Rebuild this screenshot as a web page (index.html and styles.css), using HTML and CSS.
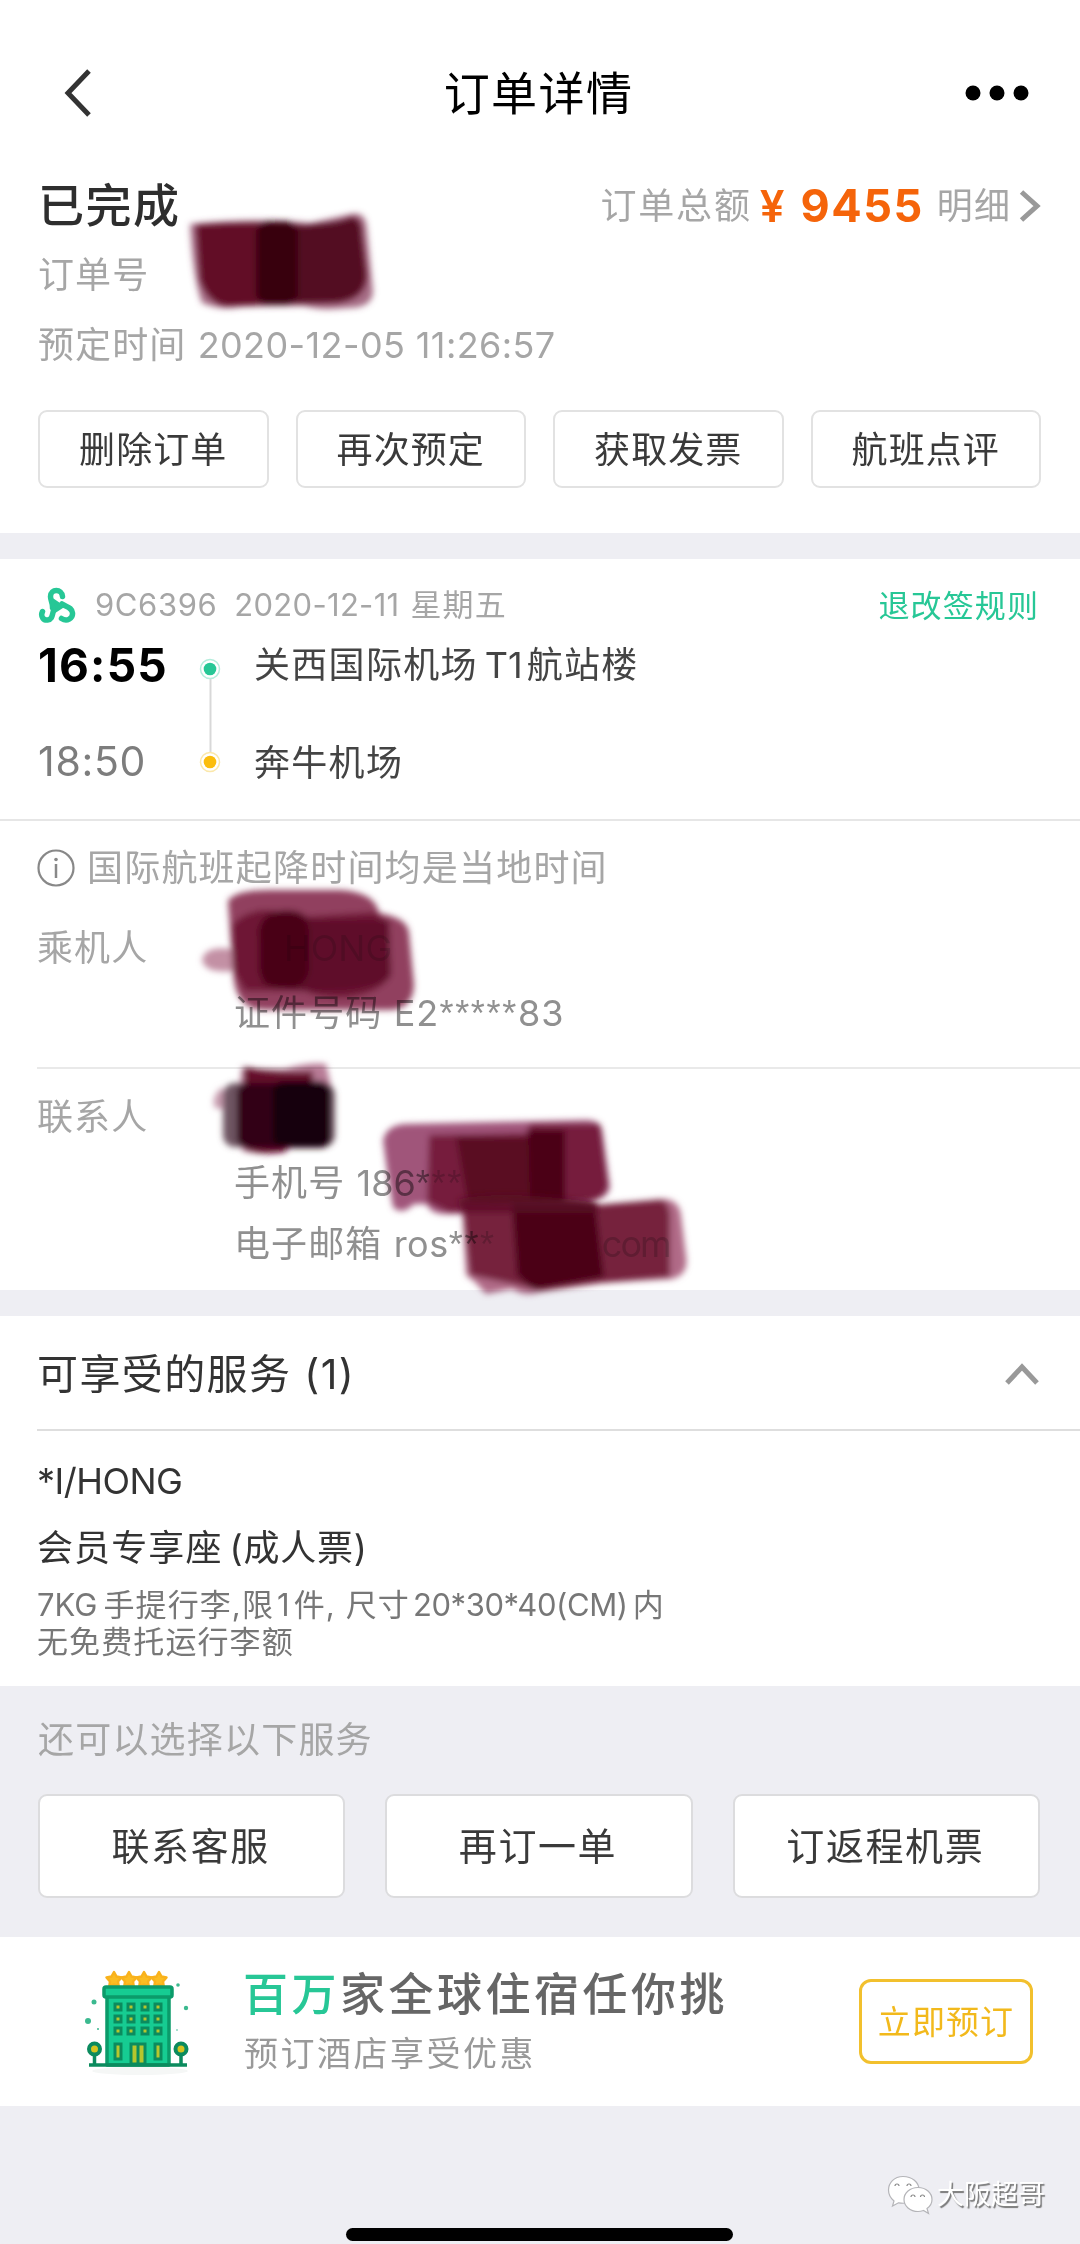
FILE: index.html
```html
<!DOCTYPE html>
<html lang="zh-CN">
<head>
<meta charset="utf-8">
<title>订单详情</title>
<link rel="stylesheet" href="styles.css">
</head>
<body>
<main class="page">
  <header class="navbar">
    <svg class="back" viewBox="0 0 30 50"><path d="M26 3 5 25 26 47" fill="none" stroke="#333" stroke-width="5"/></svg>
    <h1>订单详情</h1>
    <svg class="more" viewBox="0 0 66 16"><circle cx="9" cy="8" r="7.5"/><circle cx="33" cy="8" r="7.5"/><circle cx="57" cy="8" r="7.5"/></svg>
  </header>

  <section class="summary">
    <div class="status-row">
      <h2>已完成</h2>
      <div class="total"><span>订单总额</span><b class="yen">¥</b><b class="amount">9455</b><span>明细</span>
        <svg class="arrow" viewBox="0 0 22 32"><path d="M2.500 2 18 16 2.500 30" fill="none" stroke="#999" stroke-width="5"/></svg>
      </div>
    </div>
    <p class="meta order-no">订单号</p>
    <p class="meta booked">预定时间 <span class="digits">2020-12-05 11:26:57</span></p>
    <div class="actions">
      <button>删除订单</button><button>再次预定</button><button>获取发票</button><button>航班点评</button>
    </div>
  </section>

  <section class="flight">
    <div class="flight-head">
      <svg class="logo" viewBox="0 0 38 36" fill="none" stroke="#27c796" stroke-width="5.500" stroke-linecap="round" stroke-linejoin="round">
        <path d="M24.500 9.500C24 1.500 12.500 1.500 12.500 9.500c0 4 2.500 7 2 11"/>
        <path d="M4.500 24.500C2 30 6 33.500 9.500 33c5.500-.8 4.500-6 6.500-11"/>
        <path d="M23.500 31.500C29 35 35 31.500 34.500 26 34 20 28 20 24 17"/>
        <path d="M15 13l9.500 6.500L16 25z" fill="#27c796" stroke-width="3"/>
      </svg>
      <span class="number">9C6396</span><span class="date">2020-12-11</span><span>星期五</span>
      <a class="rules">退改签规则</a>
    </div>
    <div class="route">
      <div class="times"><b>16:55</b><span>18:50</span></div>
      <svg class="track" viewBox="0 0 24 120">
        <path d="M12.500 22v76" stroke="#d8d8d8" stroke-width="2"/>
        <circle cx="12" cy="14" r="9.500" fill="#fff" stroke="#b5eddc" stroke-width="1.500"/><circle cx="12" cy="14" r="6.300" fill="#27c796"/>
        <circle cx="12" cy="107" r="9.500" fill="#fff" stroke="#fbe8ab" stroke-width="1.500"/><circle cx="12" cy="107" r="6.300" fill="#fbbd0c"/>
      </svg>
      <div class="stations"><span>关西国际机场<i>T1</i>航站楼</span><span>奔牛机场</span></div>
    </div>
  </section>

  <section class="people">
    <div class="notice">
      <svg class="info" viewBox="0 0 38 38"><circle cx="19" cy="19" r="17.500" fill="none" stroke="#888" stroke-width="2.200"/><circle cx="19" cy="10.500" r="1.800" fill="#888"/><path d="M19 15v14" stroke="#888" stroke-width="2.500"/></svg>
      <span>国际航班起降时间均是当地时间</span>
    </div>
    <div class="passenger">
      <span class="label">乘机人</span>
      <div class="detail"><span class="name">HONG</span><span>证件号码 E2<i class="mask">*****</i>83</span></div>
    </div>
    <div class="contact">
      <span class="label">联系人</span>
      <div class="detail"><span>手机号 <em class="phone">186<i class="mask">*</i><i class="mask faint">**</i></em></span><span>电子邮箱 <em class="mail">ros<i class="mask">**</i><i class="mask faint">*</i><i class="domain faint">com</i></em></span></div>
    </div>
  </section>

  <section class="service">
    <div class="service-head">
      <h3>可享受的服务 (1)</h3>
      <svg class="fold" viewBox="0 0 34 22"><path d="M2 20 17 4 32 20" fill="none" stroke="#999" stroke-width="5"/></svg>
    </div>
    <p class="traveler">*I/HONG</p>
    <p class="seat">会员专享座<span>(成人票)</span></p>
    <p class="baggage first"><span>7KG</span>手提行李,限<i>1</i>件, 尺寸<i class="size">20*30*40(CM)</i>内</p>
    <p class="baggage">无免费托运行李额</p>
  </section>

  <section class="more-services">
    <p>还可以选择以下服务</p>
    <div class="choices"><button>联系客服</button><button>再订一单</button><button>订返程机票</button></div>
  </section>

  <section class="promo">
    <svg class="hotel" viewBox="0 0 120 112">
      <ellipse cx="60" cy="104" rx="48" ry="4" fill="#f5f7f6"/>
      <g fill="#fbbd22" stroke="#f9b21c" stroke-width="2.500" stroke-linejoin="round">
        <path id="star" d="M34 5l2.500 4.500 5 1-3.500 4 .7 5-4.700-2-4.700 2 .7-5-3.500-4 5-1z"/>
        <use href="#star" x="15"/><use href="#star" x="30"/><use href="#star" x="45"/>
      </g>
      <g fill="#16cc92" stroke="#0b9b6a" stroke-width="3.500" stroke-linejoin="round">
        <path d="M27 29h62v69H27z"/><rect x="24" y="20" width="68" height="10" rx="2"/>
      </g>
      <g fill="#b6c62d" stroke="#0b8b5e" stroke-width="3">
        <path d="M35 37h6v6h-6zM48 37h6v6h-6zM62 37h6v6h-6zM75 37h6v6h-6zM35 49h6v6h-6zM48 49h6v6h-6zM62 49h6v6h-6zM75 49h6v6h-6zM35 61h6v6h-6zM48 61h6v6h-6zM62 61h6v6h-6zM75 61h6v6h-6z"/>
        <path d="M35 77h6v15h-6zM75 77h6v15h-6zM51 77h7v20h-7zM58 77h7v20h-7z"/>
      </g>
      <path d="M9 98h98M14.500 84v14M101 84v14" stroke="#0b8b5e" stroke-width="3.500"/>
      <g fill="#d4c51f" stroke="#0b8b5e" stroke-width="4"><circle cx="14.500" cy="82" r="5.500"/><circle cx="101" cy="82" r="5.500"/></g>
      <g fill="#3bb98f"><circle cx="14" cy="35" r="2.500"/><circle cx="8" cy="54" r="3"/><circle cx="98" cy="18" r="1.800"/><circle cx="106" cy="41" r="2.200"/><circle cx="18" cy="62" r="1"/><circle cx="97" cy="63" r=".8"/></g>
    </svg>
    <div class="pitch"><strong><mark>百万</mark>家全球住宿任你挑</strong><span>预订酒店享受优惠</span></div>
    <button>立即预订</button>
  </section>

  <footer class="foot">
    <div class="account">
      <svg viewBox="0 0 46 40" fill="#fff" stroke="#b4b4b8" stroke-width="1.200">
        <path d="M16 1.500C7 1.500 1.500 8 1.500 15c0 5 2.500 8.500 5.500 11l-1.500 5 6-3.200c12 2.200 20.500-4 20.500-13C32 7 25 1.500 16 1.500z"/>
        <path d="M31 12.500c-8 0-14 5.500-14 12s6 12 14 12c2 0 4-.5 5.500-1l5 3-1.500-5c3-2 5-5.300 5-9 0-6.500-6-12-14-12z"/>
        <path d="M8 11a2 2 0 0 1 4 0M20 11a2 2 0 0 1 4 0M24 22a2 2 0 0 1 4 0M33.500 22a2 2 0 0 1 4 0" fill="none" stroke="#888"/>
      </svg>
      <span>大阪超哥</span>
    </div>
    <div class="home-bar"></div>
  </footer>

  <svg class="brush" viewBox="0 0 1080 1400">
    <defs>
      <filter id="soft" x="-20%" y="-20%" width="140%" height="140%"><feGaussianBlur stdDeviation="3"/></filter>
    </defs>
    <g filter="url(#soft)">
      <path d="M190 224Q255 217 310 223 337 217 351 214 366 211 367 229L373 291Q373 308 348 308 320 311 304 306 260 306 240 307 222 311 202 303 193 280 190 224z" fill="#8f4867" opacity=".8"/>
      <path d="M196 225Q260 220 312 226 340 222 351 217 362 217 362 235L367 275Q366 300 335 303 280 304 225 306 208 302 200 280z" fill="#620d28"/>
      <path d="M296 226Q340 222 351 219 360 217 361 235L364 275Q364 298 335 301L296 303z" fill="#520a20"/>
      <rect x="256" y="221" width="42" height="84" rx="13" fill="#380009"/>
    </g>
    <g filter="url(#soft)">
      <path d="M232 949Q205 945 202 960 205 974 234 971z" fill="#c390a4"/>
      <path d="M228 901Q235 890 270 890L340 890Q375 892 379 913 408 918 409 933L414 985Q413 1009 390 1010L266 1010Q234 1011 233 970z" fill="#91405f"/>
      <path d="M232 925Q255 900 300 917L375 912Q385 918 389 930L391 975Q382 992 350 997 320 999 305 991L245 991 233 970z" fill="#6e1735"/>
      <path d="M258 930Q270 904 300 912L312 920 389 920 391 975Q380 992 300 991L262 985z" fill="#5f0f29"/>
      <rect x="259" y="912" width="50" height="76" rx="20" fill="#4a0516"/>
    </g>
    <g filter="url(#soft)">
      <path d="M222 1087Q210 1098 215 1108L229 1110z" fill="#c79caf"/>
      <path d="M242 1067Q265 1070 285 1069 310 1062 326 1064L332 1090 333 1140Q327 1147 290 1148 266 1157 242 1151L240 1085z" fill="#b87c96"/>
      <path d="M244 1067Q276 1073 313 1071L313 1120 285 1152Q262 1156 244 1149z" fill="#650a2b"/>
      <rect x="223" y="1083" width="112" height="64" rx="12" fill="#6e5562"/>
      <rect x="237" y="1083" width="94" height="65" rx="10" fill="#310013"/>
      <rect x="273" y="1081" width="57" height="66" rx="10" fill="#190007"/>
    </g>
    <g filter="url(#soft)">
      <path d="M383 1140Q387 1125 405 1124L585 1120Q602 1119 603 1135L610 1187Q608 1199 590 1201L600 1212 450 1214Q430 1215 427 1204L414 1204Q402 1216 393 1207 388 1180 383 1140z" fill="#a0557a"/>
      <path d="M429 1135L526 1133 530 1124 600 1124 608 1185Q604 1200 590 1201L450 1213 427 1202z" fill="#761e3e"/>
      <path d="M456 1137h109v69h-97z" fill="#5a0b23"/>
      <path d="M528 1130h37v74h-35z" fill="#4b0519"/>
    </g>
    <g filter="url(#soft)">
      <path d="M462 1202L585 1206 660 1199Q679 1198 681 1215L686 1256Q689 1275 672 1279L600 1283 540 1292Q525 1297 512 1289L486 1294 475 1282 466 1275z" fill="#b06b87"/>
      <path d="M462 1202L585 1206 660 1200Q668 1200 670 1215V1277L600 1283 540 1291 513 1284 470 1275z" fill="#76203d"/>
      <path d="M512 1202h83l9 75-70 13-17-15z" fill="#4b0519"/>
      <path d="M458 1199q50-10 140 4v10H462z" fill="#5a0b23" opacity=".7"/>
    </g>
  </svg>
</main>
</body>
</html>
```
FILE: styles.css
```css
* { box-sizing: border-box; }
body { margin: 0; background: #eeeef3; font-family: Inter, "Noto Sans CJK SC", sans-serif; font-size: 36px; line-height: 48px; letter-spacing: 1.1px; color: #a6a6a6; }
h1, h2, h3, p { margin: 0; }
i, em { font-style: normal; }
button { font: inherit; letter-spacing: inherit; padding: 2px 0 0; color: #3a3a3a; background: #fff; border: 2px solid #e2e2e2; border-radius: 9px; }
.page { position: relative; width: 1080px; height: 2244px; overflow: hidden; display: flex; flex-direction: column; background: #eeeef3; }
section { background: #fff; flex: none; }

.navbar { height: 172px; padding: 32px 50px 18px 63px; background: #fff; display: flex; align-items: center; justify-content: space-between; flex: none; }
.navbar h1 { font-size: 46px; font-weight: 400; letter-spacing: 1.400px; color: #000; padding: 0 0 0 20px; }
.back { width: 30px; height: 50px; }
.more { width: 66px; height: 16px; }

.summary { height: 361px; padding: 10px 39px 0 38px; }
.status-row { display: flex; justify-content: space-between; height: 48px; }
.status-row h2 { font-size: 46px; font-weight: 500; letter-spacing: 1.5px; color: #2e2e2e; margin-top: -1px; }
.total { display: flex; align-items: center; }
.total b { color: #f5640a; font-size: 45px; font-weight: 700; }
.yen { margin: 0 15px 0 8px; }
.total .yen { font-size: 44px; font-weight: 600; }
.amount { margin-right: 13px; letter-spacing: 1.5px; }
.arrow { width: 22px; height: 32px; margin-left: 8px; }
.total span:first-child { letter-spacing: 1.8px; }
.order-no { margin-top: 21px; }
.booked { margin-top: 22px; }
.digits { letter-spacing: .4px; }
.actions { display: grid; grid-template-columns: repeat(4, 1fr); gap: 27px; margin-top: 41px; }
.actions button { height: 78px; }

.flight { height: 260px; margin-top: 26px; padding: 22px 41px 0 38px; }
.flight-head { display: flex; align-items: center; height: 48px; font-size: 31px; }
.logo { width: 38px; height: 36px; margin-right: 19px; }
.number { margin-right: 17px; letter-spacing: .6px; }
.date { margin-right: 11px; letter-spacing: .3px; }
.rules { margin: 2px 0 0 auto; color: #27c796; }
.route { display: flex; height: 150px; padding-top: 12px; }
.times { width: 160px; display: flex; flex-direction: column; gap: 48px; }
.times b { font-size: 46px; color: #000; font-weight: 700; letter-spacing: 1.2px; }
.times span { font-size: 41px; color: #7d7d7d; letter-spacing: .7px; }
.track { width: 24px; height: 120px; margin: 14px 32px 0 0; }
.stations { display: flex; flex-direction: column; gap: 50px; color: #444; letter-spacing: 1.3px; }
.stations i { margin: 0 4px 0 7px; letter-spacing: 0; }

.people { height: 471px; border-top: 2px solid #e6e6e6; padding-left: 37px; }
.notice { display: flex; align-items: center; gap: 12px; height: 48px; margin-top: 23px; letter-spacing: 1.2px; }
.info { width: 38px; height: 38px; }
.passenger { display: flex; height: 175px; padding-top: 32px; }
.label { width: 197px; }
.detail { display: flex; flex-direction: column; color: #909090; }
.name { height: 48px; margin: 0 0 17px; padding-left: 50px; letter-spacing: 0; color: #dadada; }
.faint { color: #cfcfcf; }
.mask { font-family: "Liberation Sans", sans-serif; letter-spacing: 1.700px; }
.contact { display: flex; border-top: 2px solid #e9e9e9; padding-top: 24px; }
.contact .detail { padding-top: 66px; gap: 12px; }
.phone { letter-spacing: 0; }
.mail { letter-spacing: .5px; }
.domain { margin-left: 106px; letter-spacing: -2px; }

.service { height: 370px; margin-top: 26px; padding-left: 37px; color: #333; }
.service-head { display: flex; align-items: center; justify-content: space-between; height: 115px; padding: 2px 41px 0 0; border-bottom: 2px solid #dedede; }
.service-head h3 { font-size: 41px; font-weight: 400; letter-spacing: 1.400px; }
.fold { width: 34px; height: 22px; }
.traveler { margin-top: 26px; letter-spacing: -.5px; }
.seat { margin-top: 19px; }
.seat span { margin-left: 7px; letter-spacing: .8px; }
.baggage { font-size: 31px; line-height: 37px; color: #777; }
.first { margin-top: 14px; }
.baggage span { margin-right: 6px; letter-spacing: 0; }
.baggage i { margin: 0 3px; }
.baggage .size { letter-spacing: -.4px; margin: 0 5px 0 3px; }

.more-services { background: #eeeef3; height: 251px; padding: 30px 40px 0 38px; letter-spacing: 1.2px; }
.choices { display: grid; grid-template-columns: repeat(3, 1fr); gap: 40px; margin-top: 30px; }
.choices button { height: 104px; padding: 0 2px 1px 0; font-size: 38px; letter-spacing: 1.6px; border-color: #dcdcde; }

.promo { height: 169px; display: flex; align-items: center; padding: 0 47px 0 80px; }
.hotel { width: 120px; height: 112px; margin-top: 2px; }
.pitch { margin: 5px 0 0 43px; display: flex; flex-direction: column; gap: 11px; flex: 1; }
.pitch strong { font-size: 45px; font-weight: 500; letter-spacing: 3.500px; color: #666; }
.pitch mark { background: none; color: #27c796; }
.pitch span { font-size: 34px; letter-spacing: 2.500px; color: #999; padding-left: 1px; }
.promo button { width: 174px; height: 85px; padding-top: 0; border: 3px solid #f2c02d; border-radius: 12px; color: #f2b91c; font-size: 33px; }

.foot { flex: 1; display: flex; flex-direction: column; align-items: center; padding-top: 65px; }
.account { align-self: flex-end; margin-right: 35px; display: flex; align-items: center; gap: 4px; font-size: 27px; letter-spacing: 0; color: #fff; text-shadow: 1.500px 1.500px 1px #777; }
.account svg { width: 46px; height: 40px; }
.home-bar { width: 387px; height: 13px; border-radius: 7px; background: #000; margin: 9px 2px 0 0; }

.brush { position: absolute; left: 0; top: 0; width: 1080px; height: 1400px; pointer-events: none; mix-blend-mode: multiply; }
```
